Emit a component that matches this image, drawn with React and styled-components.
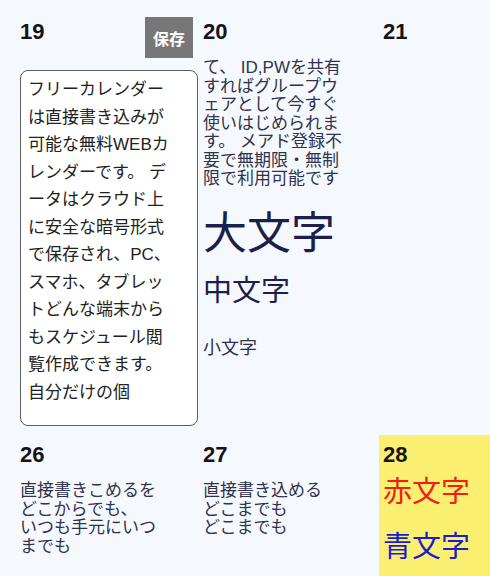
import React from "react"
import styled, { createGlobalStyle } from "styled-components"

const GlobalStyle = createGlobalStyle`
  html, body {
    margin: 0;
    padding: 0;
    background: #f5f8fc;
    overflow: hidden;
  }
  body {
    font-family: "Liberation Sans", "Noto Sans CJK JP", sans-serif;
    color: #222;
  }
`

const Calendar = styled.div`
  display: grid;
  grid-template-columns: 183px 183px 1fr;
  grid-template-rows: 423px 141px;
  margin: 12px 0 0 13px;
`

const Cell = styled.div`
  min-width: 0;
  padding: 5px 6px 0 7px;
  background: ${props => props.$highlight ? "#fbef72" : "transparent"};
  &:nth-child(3n) {
    padding-left: 4px;
  }
`

const CellHead = styled.div`
  display: flex;
  justify-content: space-between;
  align-items: flex-start;
`

const DayNum = styled.div`
  font-size: 22px;
  font-weight: bold;
  line-height: 30px;
  color: #141414;
`

const SaveButton = styled.button`
  width: 48px;
  height: 41px;
  margin-right: -3px;
  padding: 0;
  border: none;
  border-radius: 0;
  background: #777;
  color: #fff;
  font-family: inherit;
  font-size: 16px;
  font-weight: bold;
  cursor: pointer;
`

const Editor = styled.textarea`
  display: block;
  box-sizing: border-box;
  width: 178px;
  height: 356px;
  margin: 12px 0 0;
  padding: 5px 22px 0 7px;
  border: 1.5px solid #5e5e5e;
  border-radius: 8px;
  background: #fff;
  color: #222;
  font-family: inherit;
  font-size: 17px;
  line-height: 27.5px;
  resize: none;
  overflow: hidden;
  outline: none;
`

const Memo = styled.div`
  width: 146px;
  margin-top: 12px;
  font-size: 17px;
  line-height: 18.5px;
  color: #2f3350;
  white-space: pre-wrap;
`

const Sample = styled.div`
  font-size: ${props => props.$size}px;
  line-height: 1.25;
  margin-top: ${props => props.$gap}px;
  color: ${props => props.$color};
  white-space: nowrap;
`

export default function App() {
    const memo19 = "フリーカレンダーは直接書き込みが可能な無料WEBカレンダーです。 データはクラウド上に安全な暗号形式で保存され、PC、スマホ、タブレットどんな端末からもスケジュール閲覧作成できます。自分だけの個"
    return (
        <>
            <GlobalStyle />
            <Calendar>
                <Cell>
                    <CellHead>
                        <DayNum>19</DayNum>
                        <SaveButton type="button">保存</SaveButton>
                    </CellHead>
                    <Editor defaultValue={memo19} />
                </Cell>
                <Cell>
                    <CellHead>
                        <DayNum>20</DayNum>
                    </CellHead>
                    <Memo>て、 ID,PWを共有すればグループウェアとして今すぐ使いはじめられます。 メアド登録不要で無期限・無制限で利用可能です</Memo>
                    <Sample $size={44} $gap={17} $color="#1b1f4b">大文字</Sample>
                    <Sample $size={29} $gap={12} $color="#1b1f4b">中文字</Sample>
                    <Sample $size={18} $gap={28} $color="#2f3350">小文字</Sample>
                </Cell>
                <Cell>
                    <CellHead>
                        <DayNum>21</DayNum>
                    </CellHead>
                </Cell>
                <Cell>
                    <CellHead>
                        <DayNum>26</DayNum>
                    </CellHead>
                    <Memo>{"直接書きこめるをどこからでも、\nいつも手元にいつまでも"}</Memo>
                </Cell>
                <Cell>
                    <CellHead>
                        <DayNum>27</DayNum>
                    </CellHead>
                    <Memo>{"直接書き込める\nどこまでも\nどこまでも"}</Memo>
                </Cell>
                <Cell $highlight>
                    <CellHead>
                        <DayNum>28</DayNum>
                    </CellHead>
                    <Sample $size={29} $gap={4} $color="#ee2014">赤文字</Sample>
                    <Sample $size={29} $gap={19} $color="#1c1ccf">青文字</Sample>
                </Cell>
            </Calendar>
        </>
    )
}
